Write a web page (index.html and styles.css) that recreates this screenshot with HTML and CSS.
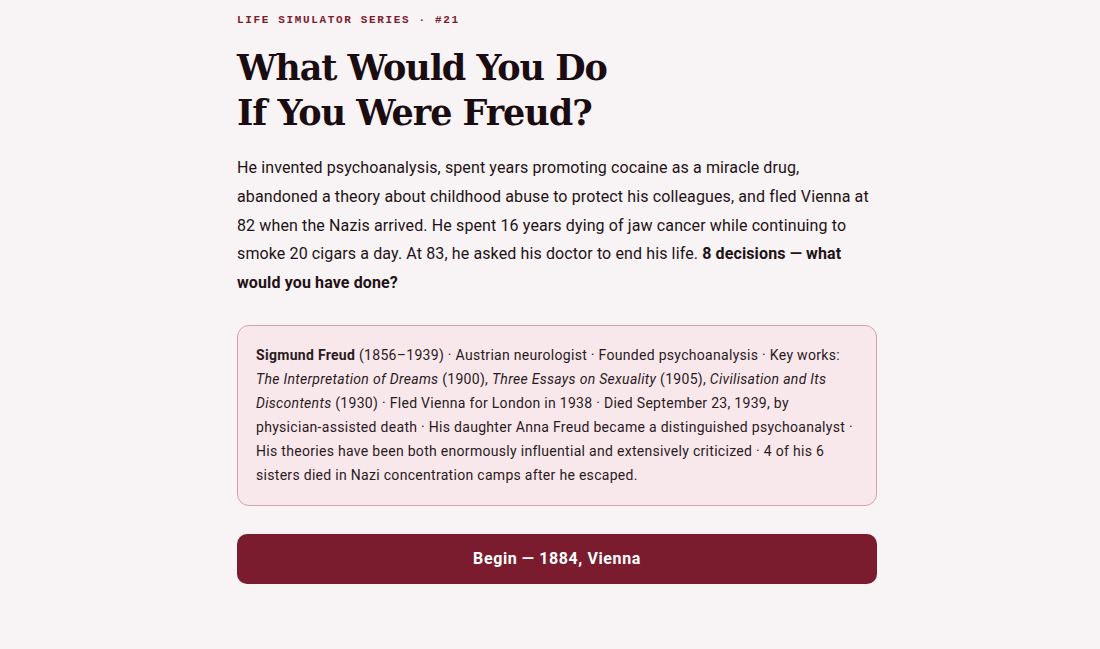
FILE: index.html
```html
<!DOCTYPE html>
<html lang="en">
<head>
  <meta charset="UTF-8">
  <meta name="viewport" content="width=device-width, initial-scale=1.0">
  <title>What Would You Do If You Were Freud?</title>

  <link rel="stylesheet" href="styles.css">
</head>
<body>
  <div id="intro">
    <p class="eyebrow">Life Simulator Series · #21</p>

    <h1 class="title">What Would You Do<br>If You Were Freud?</h1>

    <p class="lead">
      He invented psychoanalysis, spent years promoting cocaine as a miracle drug, abandoned a theory about childhood abuse to protect his colleagues, and fled Vienna at 82 when the Nazis arrived. He spent 16 years dying of jaw cancer while continuing to smoke 20 cigars a day. At 83, he asked his doctor to end his life. <strong>8 decisions — what would you have done?</strong>
    </p>

    <div class="bio">
      <strong>Sigmund Freud</strong> (1856–1939) · Austrian neurologist · Founded psychoanalysis · Key works: <em>The Interpretation of Dreams</em> (1900), <em>Three Essays on Sexuality</em> (1905), <em>Civilisation and Its Discontents</em> (1930) · Fled Vienna for London in 1938 · Died September 23, 1939, by physician-assisted death · His daughter Anna Freud became a distinguished psychoanalyst · His theories have been both enormously influential and extensively criticized · 4 of his 6 sisters died in Nazi concentration camps after he escaped.
    </div>

    <button class="start">Begin — 1884, Vienna</button>
  </div>
</body>
</html>
```

FILE: styles.css
```css
*{
  margin: 0;
  padding: 0;
  box-sizing: border-box;
}

body{
  padding-left: 14px;
  background: #f8f3f4;
  color: #1f1216;
  font-family: Roboto, "Noto Sans", sans-serif;
}

#intro{
  width: 640px;
  margin: 0 auto;
  padding-top: 13px;
}

.eyebrow{
  font-family: "Liberation Mono", "DejaVu Sans Mono", monospace;
  font-size: 11px;
  font-weight: bold;
  letter-spacing: 0.15em;
  text-transform: uppercase;
  color: #7b1c2e;
  line-height: 14px;
}

.title{
  margin-top: 18px;
  font-family: "DejaVu Serif", "Liberation Serif", serif;
  font-size: 35px;
  font-weight: bold;
  line-height: 45px;
  letter-spacing: -0.03em;
  color: #1a0c10;
}

.lead{
  margin-top: 19px;
  font-size: 16px;
  line-height: 28.8px;
  letter-spacing: 0.12px;
  color: #1f1216;
}

.bio{
  margin-top: 27px;
  padding: 17px 18px 18px;
  background: #f8e8eb;
  border: 1px solid #d4a2ad;
  border-radius: 12px;
  font-size: 14px;
  line-height: 24px;
  letter-spacing: 0.3px;
  color: #2a1a1e;
}

.start{
  display: block;
  width: 100%;
  height: 50px;
  margin-top: 28px;
  border: none;
  border-radius: 10px;
  background: #7b1c2e;
  color: #fff;
  font-family: Roboto, "Noto Sans", sans-serif;
  font-size: 16px;
  font-weight: bold;
  letter-spacing: 0.6px;
  cursor: pointer;
}
```
